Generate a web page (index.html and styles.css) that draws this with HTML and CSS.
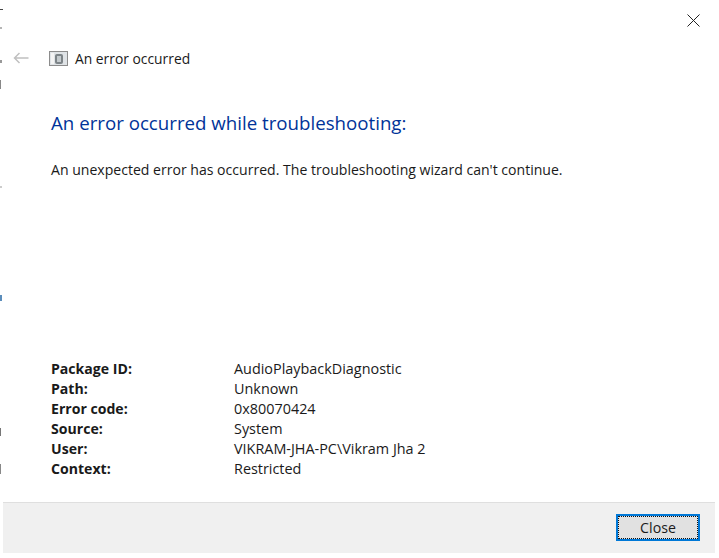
FILE: index.html
```html
<!DOCTYPE html>
<html lang="en">
<head>
<meta charset="utf-8">
<title>An error occurred</title>
<link rel="stylesheet" href="styles.css">
</head>
<body>
<div class="strip">
  <i class="mark m1"></i><i class="mark m2"></i><i class="mark m3"></i><i class="mark m4"></i>
  <i class="mark m5"></i><i class="mark m6"></i><i class="mark m7"></i><i class="mark m8"></i>
</div>
<main class="dialog">
  <div class="close-row">
    <svg class="close-icon" width="13" height="13" viewBox="0 0 13 13"><path d="M.5.5l12 12M12.5.5l-12 12" stroke="#222" stroke-width="1" fill="none"/></svg>
  </div>
  <div class="nav-row">
    <svg class="back" width="16" height="12" viewBox="0 0 16 12"><path d="M15.5 6H1.5M6.5 1l-5 5 5 5" stroke="#c0c0c0" stroke-width="1.5" fill="none"/></svg>
    <svg class="app-icon" width="19" height="15" viewBox="0 0 19 15"><rect x=".5" y=".5" width="18" height="14" fill="#dfe3e6" stroke="#8c8c8c"/><rect x="2" y="2" width="3" height="11" fill="#f4f4f4"/><rect x="6" y="3" width="8" height="10" rx="2" fill="#7d8488"/><rect x="8" y="5" width="4" height="6" fill="#c4cacd"/></svg>
    <span class="nav-title">An error occurred</span>
  </div>
  <div class="content">
    <h1 class="heading">An error occurred while troubleshooting:</h1>
    <p class="message">An unexpected error has occurred. The troubleshooting wizard can't continue.</p>
    <dl class="details">
      <dt>Package ID:</dt><dd>AudioPlaybackDiagnostic</dd>
      <dt>Path:</dt><dd>Unknown</dd>
      <dt>Error code:</dt><dd>0x80070424</dd>
      <dt>Source:</dt><dd>System</dd>
      <dt>User:</dt><dd>VIKRAM-JHA-PC\Vikram Jha 2</dd>
      <dt>Context:</dt><dd>Restricted</dd>
    </dl>
  </div>
  <footer class="footer">
    <button class="close-btn" type="button"><span class="close-label">Close</span></button>
  </footer>
</main>
</body>
</html>
```
FILE: styles.css
```css
* { box-sizing: border-box; }
html, body { margin: 0; height: 100%; background: #fff; }
body {
  display: flex;
  overflow: hidden;
  font-family: "Open Sans", "Noto Sans", sans-serif;
  color: #1a1a1a;
}
.strip { position: relative; width: 3px; flex: none; }
.mark { position: absolute; left: 0; width: 2px; background: #b5b5b5; }
.m1 { top: 9px; height: 1px; width: 3px; background: #444; }
.m2 { top: 27px; height: 2px; }
.m3 { top: 60px; height: 3px; background: #999; }
.m4 { top: 80px; height: 9px; width: 1px; background: #888; }
.m5 { top: 186px; height: 2px; background: #ccc; }
.m6 { top: 295px; height: 6px; background: #5b8dbb; }
.m7 { top: 428px; height: 8px; width: 1px; background: #777; }
.m8 { top: 464px; height: 10px; width: 1px; background: #888; }
.dialog {
  width: 712px;
  height: 553px;
  flex: none;
  display: flex;
  flex-direction: column;
}
.close-row {
  height: 42px;
  display: flex;
  justify-content: flex-end;
  padding: 14px 15px 0 0;
}
.close-icon { display: block; }
.nav-row {
  height: 32px;
  display: flex;
  align-items: center;
  padding-left: 10px;
}
.back { margin-right: 20px; }
.app-icon { margin-right: 7px; }
.nav-title { font-size: 13.85px; }
.content { flex: 1; padding: 0 0 0 48px; display: flex; flex-direction: column; }
.heading {
  margin: 34px 0 0;
  font-size: 18.7px;
  line-height: 30px;
  font-weight: 400;
  color: #003399;
}
.message { margin: 22px 0 0; font-size: 14.07px; line-height: 20px; }
.details {
  margin: 179px 0 0;
  display: grid;
  grid-template-columns: 183px 1fr;
  grid-auto-rows: 20px;
  font-size: 14.4px;
  line-height: 19px;
}
.details dt { font-weight: 700; font-size: 14.1px; line-height: 20px; }
.details dd { margin: 0; }
.footer {
  height: 51px;
  flex: none;
  background: #f0f0f0;
  border-top: 1px solid #dfdfdf;
  display: flex;
  justify-content: flex-end;
  padding: 11px 15px 0 0;
}
.close-btn {
  width: 84px;
  height: 27px;
  padding: 0;
  background: #e1e1e1;
  border: 2px solid #0078d7;
  outline: 1px dotted #111;
  outline-offset: -3px;
  font: inherit;
  font-size: 14.2px;
  color: #1a1a1a;
}
```
